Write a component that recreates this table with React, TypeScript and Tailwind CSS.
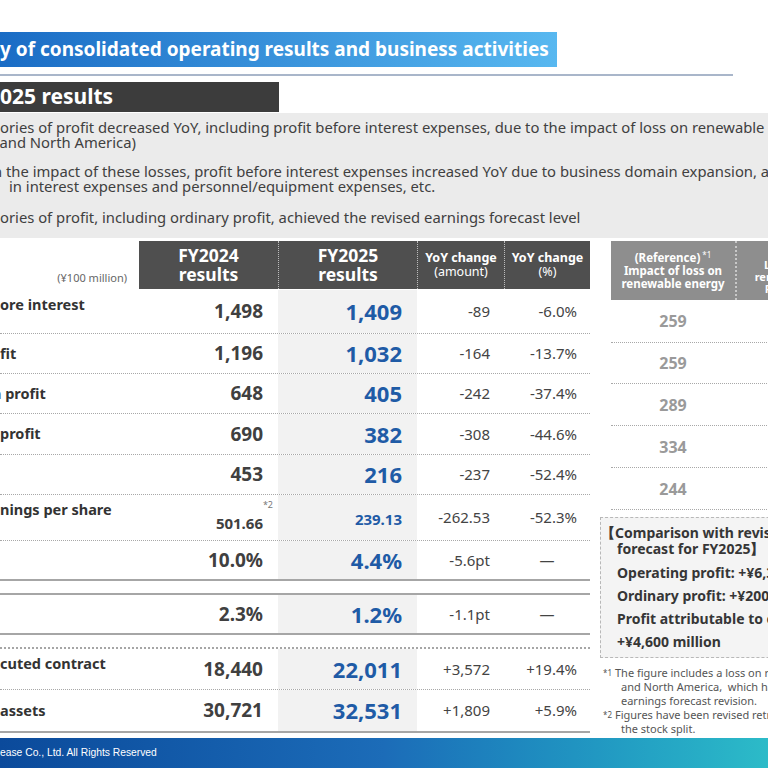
type Row = {
  label: string;
  top?: boolean;
  v24: string;
  v25: string;
  amt: string;
  pct: string;
  h: string;
  small?: boolean;
  border: string;
};

const groupA: Row[] = [
  { label: "ore interest", top: true, v24: "1,498", v25: "1,409", amt: "-89", pct: "-6.0%", h: "h-[44px]", border: "border-b border-dotted border-[#a8a8a8]" },
  { label: "fit", v24: "1,196", v25: "1,032", amt: "-164", pct: "-13.7%", h: "h-[40px]", border: "border-b border-dotted border-[#a8a8a8]" },
  { label: "n profit", v24: "648", v25: "405", amt: "-242", pct: "-37.4%", h: "h-[40px]", border: "border-b border-dotted border-[#a8a8a8]" },
  { label: "profit", v24: "690", v25: "382", amt: "-308", pct: "-44.6%", h: "h-[41px]", border: "border-b border-dotted border-[#a8a8a8]" },
  { label: "", v24: "453", v25: "216", amt: "-237", pct: "-52.4%", h: "h-[40px]", border: "border-b border-dotted border-[#a8a8a8]" },
  { label: "nings per share", top: true, v24: "501.66", v25: "239.13", amt: "-262.53", pct: "-52.3%", h: "h-[46px]", small: true, border: "border-b border-dotted border-[#a8a8a8]" },
  { label: "", v24: "10.0%", v25: "4.4%", amt: "-5.6pt", pct: "—", h: "h-[40px]", border: "border-b-2 border-[#a6a6a6]" },
];

const groupB: Row[] = [
  { label: "", v24: "2.3%", v25: "1.2%", amt: "-1.1pt", pct: "—", h: "h-[42px]", border: "border-y-2 border-[#a6a6a6]" },
];

const groupC: Row[] = [
  { label: "cuted contract", top: true, v24: "18,440", v25: "22,011", amt: "+3,572", pct: "+19.4%", h: "h-[43px]", border: "border-t-2 border-t-[#a6a6a6] border-b border-b-[#a8a8a8] border-dotted" },
  { label: "assets", v24: "30,721", v25: "32,531", amt: "+1,809", pct: "+5.9%", h: "h-[43px]", border: "border-b-2 border-[#a6a6a6]" },
];

function TableRow({ r }: { r: Row }) {
  return (
    <div className={`grid grid-cols-[139px_139px_139px_87px_86px] ${r.h} ${r.border}`}>
      <div className={`flex ${r.top ? "items-start pt-[4px]" : "items-center"} whitespace-nowrap text-[14.5px] font-bold text-[#333] ${r.label.startsWith("n ") ? "-ml-[8px]" : ""}`}>
        {r.label}
      </div>
      <div className="relative flex items-center justify-end pr-[15px]">
        {r.small ? (
          <span className="mt-[12px] text-[15px] font-bold text-[#404040]">
            {r.v24}
            <span className="absolute right-[5px] top-[3px] text-[9px] font-normal text-[#777]">*2</span>
          </span>
        ) : (
          <span className="text-[19px] font-bold text-[#404040]">{r.v24}</span>
        )}
      </div>
      <div className="flex items-center justify-end bg-[#f2f2f2] pr-[15px]">
        {r.small ? (
          <span className="mt-[3px] text-[15px] font-bold text-[#1f5ba6]">{r.v25}</span>
        ) : (
          <span className="text-[22px] font-bold text-[#1f5ba6]">{r.v25}</span>
        )}
      </div>
      <div className="flex items-center justify-end pr-[14px] text-[15px] text-[#444]">{r.amt}</div>
      <div className={`flex items-center ${r.pct === "—" ? "justify-center" : "justify-end pr-[13px]"} text-[15px] text-[#444]`}>
        {r.pct}
      </div>
    </div>
  );
}

const refValues = [
  { v: "259", h: "h-[43px]" },
  { v: "259", h: "h-[41px]" },
  { v: "289", h: "h-[42px]" },
  { v: "334", h: "h-[42px]" },
  { v: "244", h: "h-[42px]" },
];

export default function App() {
  return (
    <div className="relative h-[768px] w-[768px] overflow-hidden bg-white font-['Noto_Sans',sans-serif] text-[#3a3a3a]">
      {/* Title */}
      <div className="pt-[32px]">
        <div className="flex h-[35px] w-[557px] items-center whitespace-nowrap bg-linear-to-r from-[#1a6cc5] to-[#58b8f0] text-[19px] font-bold text-white">
          y of consolidated operating results and business activities
        </div>
        <div className="mt-[7px] h-[2px] w-[733px] bg-[#a9b6ca]" />
        <div className="mt-[6px] flex h-[30px] w-[279px] items-center whitespace-nowrap bg-[#3c3c3c] text-[21px] font-bold text-white">
          025 results
        </div>
      </div>

      {/* Summary */}
      <div className="mt-px h-[125px] whitespace-nowrap bg-[#ebebeb] pt-[7px] text-[14.8px] leading-[15px] text-[#404040]">
        <p>ories of profit decreased YoY, including profit before interest expenses, due to the impact of loss on renewable energy</p>
        <p className="-ml-[5px]">(and North America)</p>
        <p className="mt-[14px] -ml-[7px]">n the impact of these losses, profit before interest expenses increased YoY due to business domain expansion, and</p>
        <p className="pl-[9px]">in interest expenses and personnel/equipment expenses, etc.</p>
        <p className="mt-[16px]">ories of profit, including ordinary profit, achieved the revised earnings forecast level</p>
      </div>

      {/* Tables */}
      <div className="mt-[3px] flex h-[497px]">
        <div className="w-[590px] shrink-0">
          <div className="grid h-[48px] grid-cols-[139px_139px_139px_87px_86px] text-white">
            <div className="flex items-end justify-end pb-[3px] pr-[12px] text-[11px] text-[#666]">(¥100 million)</div>
            <div className="flex flex-col items-center justify-center bg-[#4f4f4f] text-[17.5px] font-bold leading-[19px]">
              <span>FY2024</span>
              <span>results</span>
            </div>
            <div className="flex flex-col items-center justify-center border-l border-dotted border-[#bdbdbd] bg-[#4f4f4f] text-[17.5px] font-bold leading-[19px]">
              <span>FY2025</span>
              <span>results</span>
            </div>
            <div className="flex flex-col items-center justify-center border-l border-dotted border-[#bdbdbd] bg-[#4f4f4f] text-[12.5px] font-bold leading-[14px]">
              <span>YoY change</span>
              <span className="font-normal">(amount)</span>
            </div>
            <div className="flex flex-col items-center justify-center border-l border-dotted border-[#bdbdbd] bg-[#4f4f4f] text-[12.5px] font-bold leading-[14px]">
              <span>YoY change</span>
              <span className="font-normal">(%)</span>
            </div>
          </div>
          <div className="mt-px">
            {groupA.map((r) => (
              <TableRow key={r.v24} r={r} />
            ))}
          </div>
          <div className="mt-[12px]">
            {groupB.map((r) => (
              <TableRow key={r.v24} r={r} />
            ))}
          </div>
          <div className="mt-[12px]">
            {groupC.map((r) => (
              <TableRow key={r.v24} r={r} />
            ))}
          </div>
        </div>

        <div className="w-[178px] shrink-0">
          <div className="ml-[21px] w-[260px]">
            <div className="flex h-[59px] text-white">
              <div className="flex w-[124px] flex-col items-center justify-center bg-[#8e8e8e] text-[11.5px] font-bold leading-[13px]">
                <span>
                  (Reference)<sup className="ml-[2px] text-[8px] font-normal">*1</sup>
                </span>
                <span>Impact of loss on</span>
                <span>renewable energy</span>
              </div>
              <div className="flex w-[136px] flex-col items-center justify-center whitespace-nowrap border-l-2 border-dotted border-[#c8c8c8] bg-[#8e8e8e] text-[11px] font-bold leading-[12px]">
                <span>(Reference)</span>
                <span>Loss excluding</span>
                <span>renewable energy</span>
                <span>FY2025 results</span>
              </div>
            </div>
            {refValues.map((r, i) => (
              <div key={i} className={`flex ${r.h} items-center border-b border-dotted border-[#a8a8a8]`}>
                <div className="w-[124px] text-center text-[16px] font-bold text-[#9a9a9a]">{r.v}</div>
              </div>
            ))}
          </div>

          <div className="ml-[10px] mt-[7px] h-[141px] w-[220px] whitespace-nowrap border border-dashed border-[#b8b8b8] bg-[#f4f4f4] pt-[7px] text-[14px] font-bold text-[#363636]">
            <p className="leading-[16px]">【Comparison with revised earnings</p>
            <p className="pl-[16px] leading-[16px]">forecast for FY2025】</p>
            <div className="mt-[4px] pl-[16px] leading-[23px]">
              <p>Operating profit: +¥6,300 million</p>
              <p>Ordinary profit: +¥200 million</p>
              <p>Profit attributable to owners of parent:</p>
              <p>+¥4,600 million</p>
            </div>
          </div>

          <div className="ml-[13px] mt-[8px] whitespace-nowrap text-[11px] leading-[14px] text-[#555]">
            <p>
              <span className="mr-[3px] align-top text-[8px]">*1</span>The figure includes a loss on renewable energy in Japan
            </p>
            <p className="pl-[18px]">and North America,&nbsp; which had been included in the</p>
            <p className="pl-[18px]">earnings forecast revision.</p>
            <p>
              <span className="mr-[3px] align-top text-[8px]">*2</span>Figures have been revised retroactively to reflect
            </p>
            <p className="pl-[18px]">the stock split.</p>
          </div>
        </div>
      </div>

      {/* Footer */}
      <div className="flex h-[30px] items-center whitespace-nowrap bg-linear-to-r from-[#0b4a9b] via-[#1c6cb8] to-[#2cbbc8] font-['Liberation_Sans',sans-serif] text-[10.3px] text-white">
        ease Co., Ltd. All Rights Reserved
      </div>
    </div>
  );
}
